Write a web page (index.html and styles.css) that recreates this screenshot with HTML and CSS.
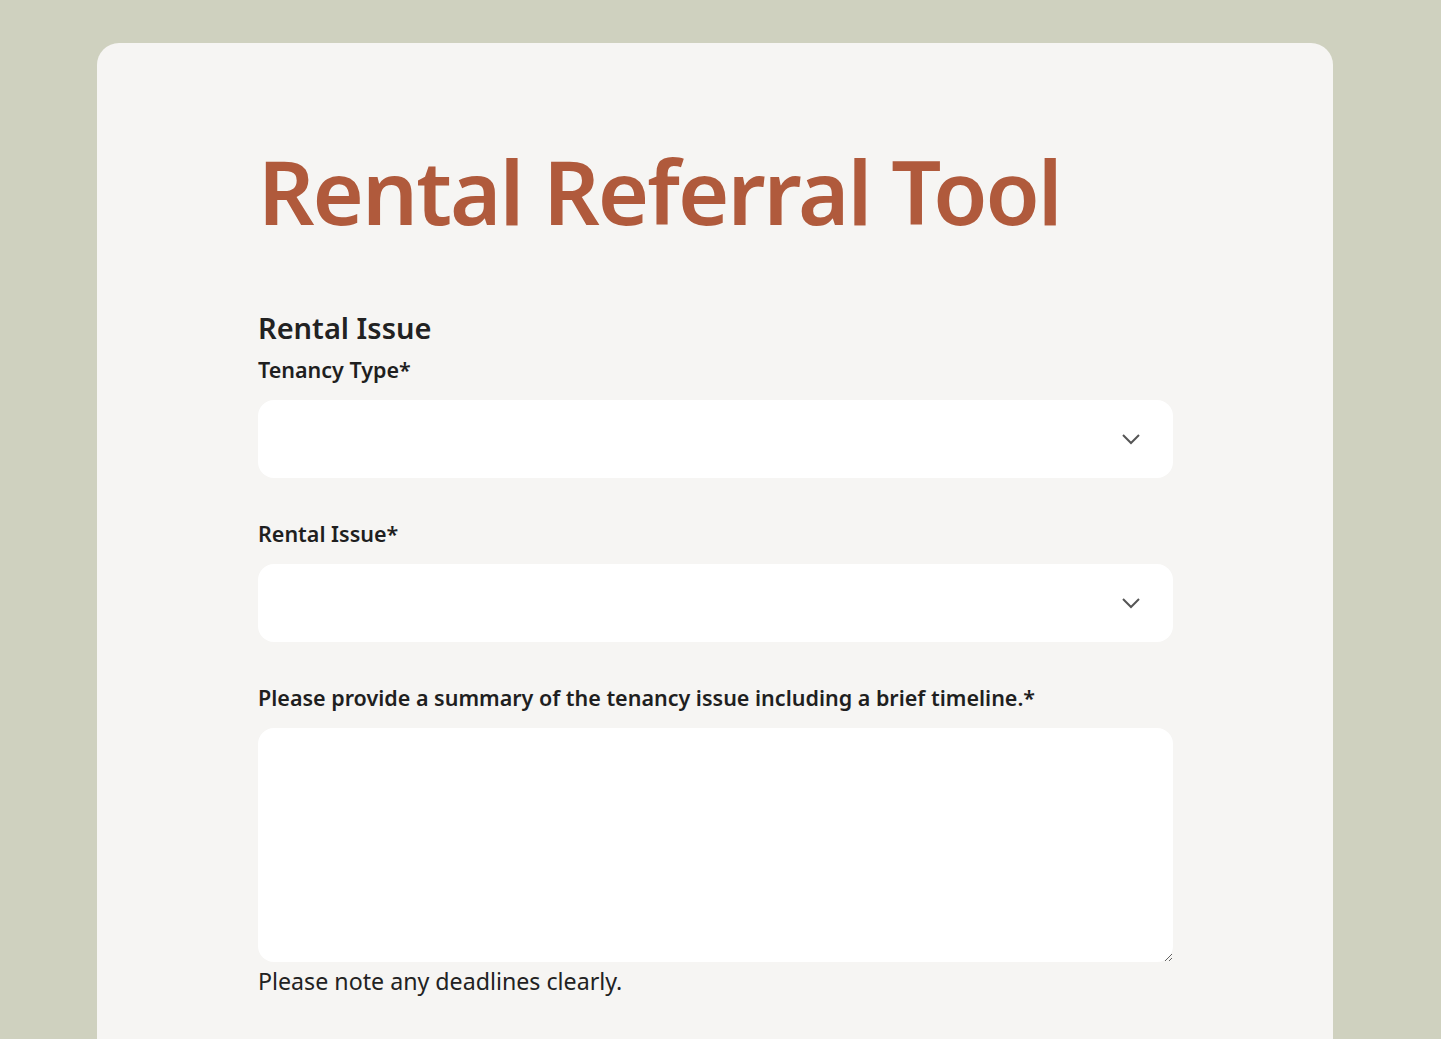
FILE: index.html
```html
<!DOCTYPE html>
<html lang="en">
<head>
  <meta charset="UTF-8" />
  <meta name="viewport" content="width=device-width, initial-scale=1" />
  <title>Rental Referral Tool</title>
  <link rel="stylesheet" href="styles.css">
</head>
<body>
  <main class="card">
    <h1>Rental Referral Tool</h1>

    <form class="form">
      <h2>Rental Issue</h2>

      <div class="field">
        <label for="tenancy">Tenancy Type*</label>
        <div class="select-wrap">
          <select id="tenancy">
            <option></option>
          </select>
          <svg class="chevron" width="20" height="12" viewBox="0 0 20 12" aria-hidden="true">
            <path d="M2 2 L10 10 L18 2" fill="none" stroke="#555" stroke-width="2" />
          </svg>
        </div>
      </div>

      <div class="field">
        <label for="issue">Rental Issue*</label>
        <div class="select-wrap">
          <select id="issue">
            <option></option>
          </select>
          <svg class="chevron" width="20" height="12" viewBox="0 0 20 12" aria-hidden="true">
            <path d="M2 2 L10 10 L18 2" fill="none" stroke="#555" stroke-width="2" />
          </svg>
        </div>
      </div>

      <div class="field">
        <label for="summary">Please provide a summary of the tenancy issue including a brief timeline.*</label>
        <textarea id="summary"></textarea>
        <p class="hint">Please note any deadlines clearly.</p>
      </div>
    </form>
  </main>
</body>
</html>
```

FILE: styles.css
```css
body {
  margin: 0;
  background-color: #cfd1bf;
  font-family: "Noto Sans", "Open Sans", sans-serif;
  color: #1f1f1f;
}
.card {
  width: 1236px;
  margin: 43px 0 0 97px;
  min-height: 1000px;
  background-color: #f6f5f3;
  border-radius: 22px 22px 0 0;
  box-sizing: border-box;
  padding: 96px 160px 0 161px;
}
h1 {
  margin: 0;
  font-size: 88px;
  font-weight: 600;
  line-height: 1.2;
  letter-spacing: -2px;
  color: #b05a3c;
}
.form {
  margin-top: 65px;
}
h2 {
  margin: 0;
  font-size: 29px;
  font-weight: 600;
  line-height: 36px;
  color: #222;
}
.field {
  margin-bottom: 42px;
}
label {
  display: block;
  font-size: 21.5px;
  font-weight: 600;
  line-height: 28px;
  margin: 0 0 16px;
  color: #1f1f1f;
}
h2 + .field label {
  margin-top: 10px;
}
.select-wrap {
  position: relative;
}
select {
  display: block;
  width: 100%;
  height: 78px;
  border: none;
  border-radius: 16px;
  background: #fff;
  appearance: none;
  font: inherit;
  font-size: 22px;
  padding: 0 20px;
}
.chevron {
  position: absolute;
  right: 32px;
  top: 33px;
  pointer-events: none;
}
textarea {
  display: block;
  width: 100%;
  height: 234px;
  box-sizing: border-box;
  border: none;
  border-radius: 16px;
  background: #fff;
  font: inherit;
  font-size: 22px;
  padding: 16px 20px;
}
.hint {
  margin: 4px 0 0;
  font-size: 23.2px;
  line-height: 30px;
  color: #222;
}
```
